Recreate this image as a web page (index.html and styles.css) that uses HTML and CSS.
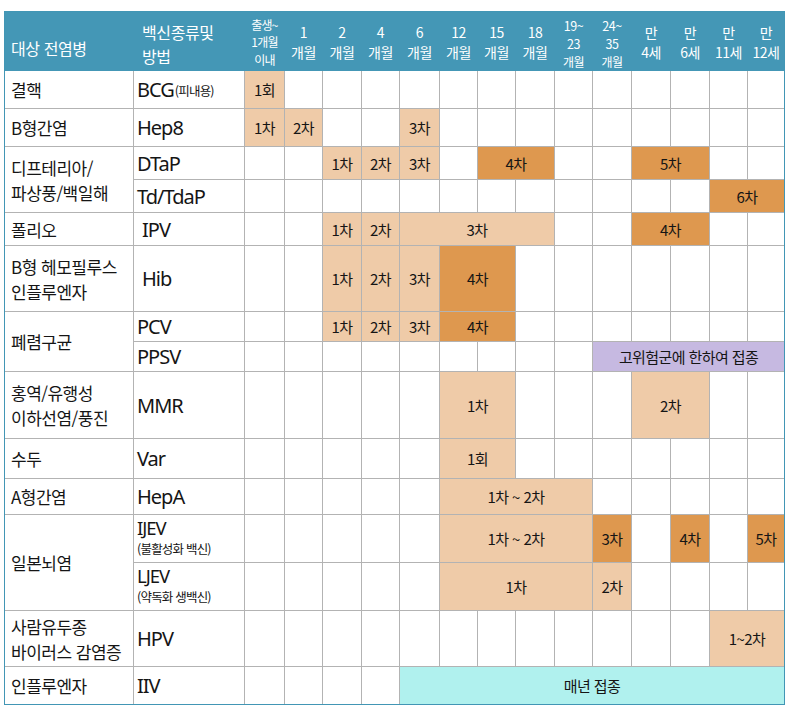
FILE: index.html
```html
<!DOCTYPE html>
<html lang="ko">
<head>
<meta charset="utf-8">
<title>표준예방접종 일정표</title>
<link rel="stylesheet" href="styles.css">
</head>
<body>
<div class="chart">
  <div class="head">
    <div class="h h-dis">대상 전염병</div>
    <div class="h h-vac">백신종류및<br>방법</div>
    <div class="h h3"><span>출생~</span><span>1개월</span><span>이내</span></div>
    <div class="h"><span>1</span><span>개월</span></div>
    <div class="h"><span>2</span><span>개월</span></div>
    <div class="h"><span>4</span><span>개월</span></div>
    <div class="h"><span>6</span><span>개월</span></div>
    <div class="h"><span>12</span><span>개월</span></div>
    <div class="h"><span>15</span><span>개월</span></div>
    <div class="h"><span>18</span><span>개월</span></div>
    <div class="h h3b"><span>19~</span><span>23</span><span class="sm">개월</span></div>
    <div class="h h3b"><span>24~</span><span>35</span><span class="sm">개월</span></div>
    <div class="h"><span>만</span><span>4세</span></div>
    <div class="h"><span>만</span><span>6세</span></div>
    <div class="h"><span>만</span><span>11세</span></div>
    <div class="h"><span>만</span><span>12세</span></div>
  </div>
  <div class="body">
    <!-- 결핵 -->
    <div class="c dis">결핵</div>
    <div class="c vac">BCG<span class="sub">(피내용)</span></div>
    <div class="c pe">1회</div>
    <div class="c"></div><div class="c"></div><div class="c"></div><div class="c"></div><div class="c"></div><div class="c"></div><div class="c"></div><div class="c"></div><div class="c"></div><div class="c"></div><div class="c"></div><div class="c"></div><div class="c"></div>

    <!-- B형간염 -->
    <div class="c dis">B형간염</div>
    <div class="c vac">Hep8</div>
    <div class="c pe">1차</div>
    <div class="c pe">2차</div>
    <div class="c"></div><div class="c"></div>
    <div class="c pe">3차</div>
    <div class="c"></div><div class="c"></div><div class="c"></div><div class="c"></div><div class="c"></div><div class="c"></div><div class="c"></div><div class="c"></div><div class="c"></div>

    <!-- DTaP -->
    <div class="c dis r2">디프테리아/<br>파상풍/백일해</div>
    <div class="c vac">DTaP</div>
    <div class="c"></div><div class="c"></div>
    <div class="c pe">1차</div>
    <div class="c pe">2차</div>
    <div class="c pe">3차</div>
    <div class="c"></div>
    <div class="c or s2">4차</div>
    <div class="c"></div><div class="c"></div>
    <div class="c or s2">5차</div>
    <div class="c"></div><div class="c"></div>

    <!-- Td/TdaP -->
    <div class="c vac">Td/TdaP</div>
    <div class="c"></div><div class="c"></div><div class="c"></div><div class="c"></div><div class="c"></div><div class="c"></div><div class="c"></div><div class="c"></div><div class="c"></div><div class="c"></div><div class="c"></div><div class="c"></div>
    <div class="c or s2">6차</div>

    <!-- 폴리오 -->
    <div class="c dis">폴리오</div>
    <div class="c vac ind">IPV</div>
    <div class="c"></div><div class="c"></div>
    <div class="c pe">1차</div>
    <div class="c pe">2차</div>
    <div class="c pe s4">3차</div>
    <div class="c"></div><div class="c"></div>
    <div class="c or s2">4차</div>
    <div class="c"></div><div class="c"></div>

    <!-- Hib -->
    <div class="c dis">B형 헤모필루스<br>인플루엔자</div>
    <div class="c vac ind">Hib</div>
    <div class="c"></div><div class="c"></div>
    <div class="c pe">1차</div>
    <div class="c pe">2차</div>
    <div class="c pe">3차</div>
    <div class="c or s2">4차</div>
    <div class="c"></div><div class="c"></div><div class="c"></div><div class="c"></div><div class="c"></div><div class="c"></div><div class="c"></div>

    <!-- PCV -->
    <div class="c dis r2">폐렴구균</div>
    <div class="c vac">PCV</div>
    <div class="c"></div><div class="c"></div>
    <div class="c pe">1차</div>
    <div class="c pe">2차</div>
    <div class="c pe">3차</div>
    <div class="c or s2">4차</div>
    <div class="c"></div><div class="c"></div><div class="c"></div><div class="c"></div><div class="c"></div><div class="c"></div><div class="c"></div>

    <!-- PPSV -->
    <div class="c vac">PPSV</div>
    <div class="c"></div><div class="c"></div><div class="c"></div><div class="c"></div><div class="c"></div><div class="c"></div><div class="c"></div><div class="c"></div><div class="c"></div>
    <div class="c lv s5">고위험군에 한하여 접종</div>

    <!-- MMR -->
    <div class="c dis">홍역/유행성<br>이하선염/풍진</div>
    <div class="c vac">MMR</div>
    <div class="c"></div><div class="c"></div><div class="c"></div><div class="c"></div><div class="c"></div>
    <div class="c pe s2">1차</div>
    <div class="c"></div><div class="c"></div><div class="c"></div>
    <div class="c pe s2">2차</div>
    <div class="c"></div><div class="c"></div>

    <!-- 수두 -->
    <div class="c dis">수두</div>
    <div class="c vac">Var</div>
    <div class="c"></div><div class="c"></div><div class="c"></div><div class="c"></div><div class="c"></div>
    <div class="c pe s2">1회</div>
    <div class="c"></div><div class="c"></div><div class="c"></div><div class="c"></div><div class="c"></div><div class="c"></div><div class="c"></div>

    <!-- A형간염 -->
    <div class="c dis">A형간염</div>
    <div class="c vac">HepA</div>
    <div class="c"></div><div class="c"></div><div class="c"></div><div class="c"></div><div class="c"></div>
    <div class="c pe s4">1차 ~ 2차</div>
    <div class="c"></div><div class="c"></div><div class="c"></div><div class="c"></div><div class="c"></div>

    <!-- 일본뇌염 IJEV -->
    <div class="c dis r2">일본뇌염</div>
    <div class="c vac two"><span class="main">IJEV</span><span class="sub2">(불활성화 백신)</span></div>
    <div class="c"></div><div class="c"></div><div class="c"></div><div class="c"></div><div class="c"></div>
    <div class="c pe s4">1차 ~ 2차</div>
    <div class="c or">3차</div>
    <div class="c"></div>
    <div class="c or">4차</div>
    <div class="c"></div>
    <div class="c or">5차</div>

    <!-- LJEV -->
    <div class="c vac two"><span class="main">LJEV</span><span class="sub2">(약독화 생백신)</span></div>
    <div class="c"></div><div class="c"></div><div class="c"></div><div class="c"></div><div class="c"></div>
    <div class="c pe s4">1차</div>
    <div class="c pe">2차</div>
    <div class="c"></div><div class="c"></div><div class="c"></div><div class="c"></div>

    <!-- HPV -->
    <div class="c dis">사람유두종<br>바이러스 감염증</div>
    <div class="c vac">HPV</div>
    <div class="c"></div><div class="c"></div><div class="c"></div><div class="c"></div><div class="c"></div><div class="c"></div><div class="c"></div><div class="c"></div><div class="c"></div><div class="c"></div><div class="c"></div><div class="c"></div>
    <div class="c pe s2">1~2차</div>

    <!-- 인플루엔자 -->
    <div class="c dis">인플루엔자</div>
    <div class="c vac">IIV</div>
    <div class="c"></div><div class="c"></div><div class="c"></div><div class="c"></div>
    <div class="c cy s10">매년 접종</div>
  </div>
</div>
</body>
</html>
```
FILE: styles.css
```css
html, body {
  margin: 0;
  padding: 0;
  background: #ffffff;
}

body {
  font-family: "Noto Sans CJK KR", "Noto Sans", sans-serif;
  color: #151515;
}

.chart {
  margin: 11px 0 0 4px;
  width: 779px;
  border: 1px solid #4296b5;
}

.head,
.body {
  display: grid;
  grid-template-columns: 128px 110px 39px 37px 38px 37px 39px 37px 37px 38px 37px 38px 38px 38px 37px 36px;
  column-gap: 1px;
}

.head {
  height: 59px;
  background: #4497b6;
  color: #ffffff;
}

.h {
  display: flex;
  flex-direction: column;
  align-items: center;
  justify-content: center;
  font-size: 14px;
  line-height: 20.5px;
  letter-spacing: -0.5px;
  white-space: nowrap;
  padding-top: 1px;
}

.h-dis {
  align-items: flex-start;
  padding: 14px 0 0 6px;
  font-size: 16px;
  letter-spacing: -0.4px;
}

.h-vac {
  display: block;
  padding: 9px 0 0 8px;
  font-size: 16px;
  line-height: 23.5px;
  letter-spacing: -0.4px;
}

.h3 {
  font-size: 12px;
  line-height: 17.5px;
  letter-spacing: -0.7px;
}

.h3b {
  font-size: 12.5px;
  line-height: 18px;
  padding-top: 4px;
}

.h3b .sm {
  font-size: 12px;
}

.body {
  grid-template-rows: 37px 37px 32px 32px 32px 65px 29px 29px 66px 39px 35px 47px 47px 55px 37px;
  row-gap: 1px;
  background: #b3b3b3;
}

.c {
  background: #ffffff;
  display: flex;
  align-items: center;
  justify-content: center;
  font-size: 15px;
  letter-spacing: -0.6px;
  white-space: nowrap;
}

.dis {
  justify-content: flex-start;
  padding-left: 6px;
  font-size: 17px;
  line-height: 25px;
  letter-spacing: -0.5px;
}

.vac {
  justify-content: flex-start;
  padding-left: 3px;
  font-family: "Noto Sans", "Noto Sans CJK KR", sans-serif;
  font-size: 20px;
  letter-spacing: -1px;
}

.vac.ind {
  padding-left: 8px;
}

.vac .sub {
  font-family: "Noto Sans CJK KR", sans-serif;
  font-size: 12.5px;
  letter-spacing: -0.8px;
  margin-left: 1px;
  padding-top: 2px;
}

.two {
  flex-direction: column;
  align-items: flex-start;
}

.two .main {
  font-size: 18.5px;
  line-height: 25px;
}

.two .sub2 {
  font-family: "Noto Sans CJK KR", sans-serif;
  font-size: 12.5px;
  line-height: 18.5px;
  letter-spacing: -0.8px;
}

.pe { background: #efcba8; }
.or { background: #de984f; }
.lv { background: #c6b9e1; }
.cy { background: #b0f1ee; }

.s2 { grid-column: span 2; }
.s4 { grid-column: span 4; }
.s5 { grid-column: span 5; }
.s10 { grid-column: span 10; }
.r2 { grid-row: span 2; }
```
